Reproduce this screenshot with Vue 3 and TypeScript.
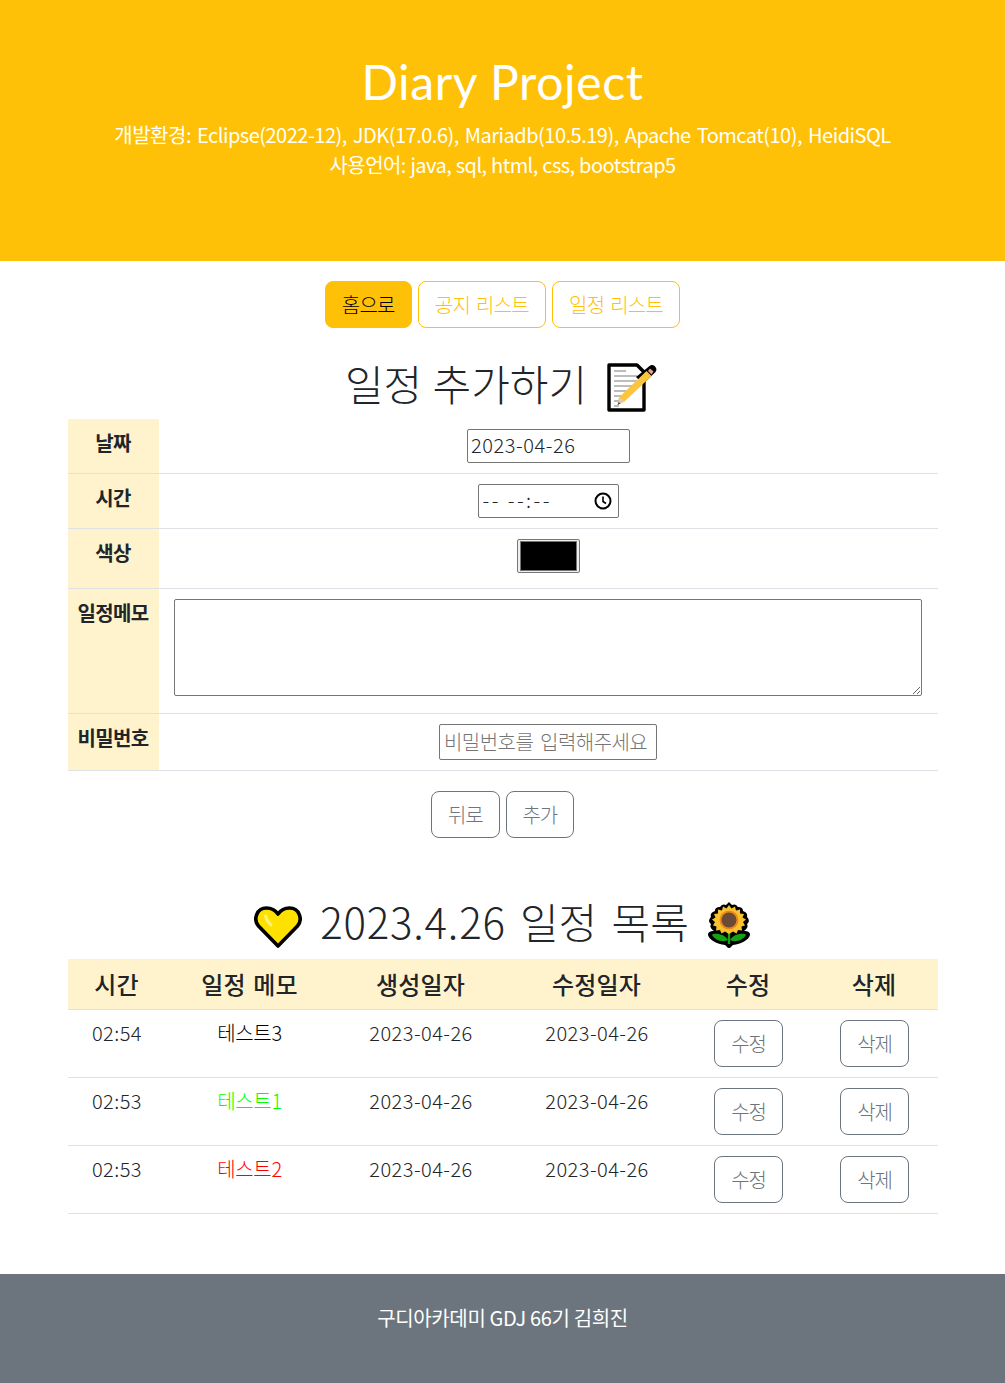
<script setup lang="ts">
interface Row { time: string; memo: string; color: string }
const rows: Row[] = [
  { time: '02:54', memo: '테스트3', color: '#000000' },
  { time: '02:53', memo: '테스트1', color: '#00ff00' },
  { time: '02:53', memo: '테스트2', color: '#ff0000' },
]
const columnWidths = [98, 168, 174, 178, 125, 127]
</script>

<template>
  <div class="page">
    <header class="hero">
      <h1>Diary Project</h1>
      <p class="line-a">개발환경: Eclipse(2022-12), JDK(17.0.6), Mariadb(10.5.19), Apache Tomcat(10), HeidiSQL</p>
      <p class="line-b">사용언어: java, sql, html, css, bootstrap5</p>
    </header>

    <main class="content">
      <nav class="tabs">
        <a class="btn solid">홈으로</a>
        <a class="btn warn">공지 리스트</a>
        <a class="btn warn">일정 리스트</a>
      </nav>

      <h2 class="title first">
        <span class="ko">일정 추가하기</span>
        <svg class="emoji memo" viewBox="0 0 50 50" aria-hidden="true">
          <path d="M2 3H30L37 10V48H2Z" fill="#fff" stroke="#000" stroke-width="3.400" stroke-linejoin="round" />
          <path d="M7 9H19M7 14H30M7 19H30M7 24H27M7 29H24M7 34H19M7 39H14M7 44H12" stroke="#a6a6a6" stroke-width="1.500" fill="none" />
          <path d="M42.500 4C44.500 2.500 46.500 3 48 4.500C49.500 6 50 8 48.500 10L36 22L29 15Z" fill="#000" />
          <path d="M39.500 9L44.500 14L17.500 39.500L11 37.500L13 34.500Z" fill="#fdc43c" />
          <path d="M43 6.500L46.500 9.500L44.500 12.500L41 9Z" fill="#e8a090" />
          <path d="M10.500 43L13 35.500L18 39.500Z" fill="#e8c8a0" />
          <path d="M10.500 43L11.500 40L13.500 41.500Z" fill="#444" />
        </svg>
      </h2>

      <table class="form-table">
        <colgroup>
          <col class="label-col" />
          <col />
        </colgroup>
        <tbody>
          <tr class="r-date">
            <th>날짜</th>
            <td><input class="field date" type="text" value="2023-04-26" /></td>
          </tr>
          <tr class="r-time">
            <th>시간</th>
            <td>
              <span class="time-wrap">
                <input class="field time" type="text" value="-- --:--" />
                <svg class="clock" viewBox="0 0 18 18" aria-hidden="true">
                  <circle cx="9" cy="9" r="7.500" fill="none" stroke="#000" stroke-width="2" />
                  <path d="M9 4.500V9.500L12 11.500" fill="none" stroke="#000" stroke-width="1.600" />
                </svg>
              </span>
            </td>
          </tr>
          <tr class="r-color">
            <th>색상</th>
            <td><input class="swatch" type="color" value="#000000" /></td>
          </tr>
          <tr class="r-memo">
            <th>일정메모</th>
            <td><textarea class="area"></textarea></td>
          </tr>
          <tr class="r-pw">
            <th>비밀번호</th>
            <td><input class="field pw" type="text" placeholder="비밀번호를 입력해주세요" /></td>
          </tr>
        </tbody>
      </table>

      <div class="actions">
        <a class="btn ghost">뒤로</a>
        <a class="btn ghost">추가</a>
      </div>

      <h2 class="title second">
        <svg class="emoji heart" viewBox="0 0 48 44" aria-hidden="true">
          <path d="M24 41L4.500 21C-1 14.500 2.500 3 12.500 3C18 3 21.500 5.500 24 9C26.500 5.500 30 3 35.500 3C45.500 3 49 14.500 43.500 21Z" fill="#ffe100" stroke="#000" stroke-width="3.600" stroke-linejoin="round" />
          <path d="M11.500 11C12.500 15 14 17.500 17 20" fill="none" stroke="#fff27a" stroke-width="3" stroke-linecap="round" />
        </svg>
        <span class="ko"><span class="digits">2023.4.26</span> 일정 목록</span>
        <svg class="emoji flower" viewBox="0 0 44 46" aria-hidden="true">
          <path d="M22 46C20 46 20 44 18 43C10 42 2 38 1 33C1 30 3 29 7 29C3 26 3 24 4 22C1 20 2 17 4 15C3 12 5 10 8 9C8 6 10 5 13 5C15 2 17 2 19 3L22 0L25 3C27 2 29 2 31 5C34 5 36 6 36 9C39 10 41 12 40 15C42 17 43 20 40 22C41 24 41 26 37 29C41 29 43 30 43 33C42 38 34 42 26 43C24 44 24 46 22 46Z" fill="#000" />
          <path d="M6 32C12 31 18 33 21 38C15 41 8 38 5 33ZM38 32C32 31 26 33 23 38C29 41 36 38 39 33Z" fill="#16a014" />
          <path d="M20.800 27H23.200V42H20.800Z" fill="#16a014" />
          <path d="M22 3L24.500 6.500L28 4.500L29 8.500L33 7.500L33 11.500L37 12L35.500 15.500L39 17.500L36 20L38 23.500L34.500 24.500L35 28.500L31 28L29.500 31.500L26 29.500L22 32L18 29.500L14.500 31.500L13 28L9 28.500L9.500 24.500L6 23.500L8 20L5 17.500L8.500 15.500L7 12L11 11.500L11 7.500L15 8.500L16 4.500L19.500 6.500Z" fill="#fbc02d" />
          <circle cx="22" cy="18" r="9.500" fill="#e88a1a" />
          <circle cx="22" cy="18" r="7.500" fill="#6b4a36" />
        </svg>
      </h2>

      <table class="list-table">
        <colgroup>
          <col v-for="(w, i) in columnWidths" :key="i" :style="{ width: w + 'px' }" />
        </colgroup>
        <thead>
          <tr>
            <th>시간</th>
            <th>일정 메모</th>
            <th>생성일자</th>
            <th>수정일자</th>
            <th>수정</th>
            <th>삭제</th>
          </tr>
        </thead>
        <tbody>
          <tr v-for="(row, i) in rows" :key="i">
            <td class="num">{{ row.time }}</td>
            <td class="memo-cell" :style="{ color: row.color }">{{ row.memo }}</td>
            <td class="num">2023-04-26</td>
            <td class="num">2023-04-26</td>
            <td class="btn-cell"><a class="btn ghost">수정</a></td>
            <td class="btn-cell"><a class="btn ghost">삭제</a></td>
          </tr>
        </tbody>
      </table>
    </main>

    <footer class="foot">구디아카데미 GDJ 66기 김희진</footer>
  </div>
</template>

<style>
html, body { margin: 0; background: #fff; }
</style>

<style scoped>
.page {
  font-family: "Noto Sans CJK KR", "Noto Sans", sans-serif;
  font-weight: 300;
  font-size: 20px;
  color: #212529;
  line-height: 30px;
  min-height: 1383px;
  display: flex;
  flex-direction: column;
}
.hero {
  height: 261px;
  box-sizing: border-box;
  background: #ffc107;
  color: #fff;
  text-align: center;
  padding-top: 54px;
}
.hero h1 {
  margin: 0 0 10px;
  font-family: "Lato", "Noto Sans", sans-serif;
  font-weight: 400;
  font-size: 48px;
  line-height: 56px;
  letter-spacing: 0.65px;
}
.hero p { margin: 0; font-weight: 400; }
.line-a { letter-spacing: -0.5px; word-spacing: 2px; }
.line-b { letter-spacing: -0.55px; word-spacing: 0.6px; }
.content {
  width: 870px;
  margin: 0 auto;
  flex: 1;
}
.tabs {
  display: flex;
  justify-content: center;
  gap: 6px;
  padding-top: 20px;
}
.btn {
  display: inline-block;
  box-sizing: border-box;
  height: 47px;
  padding: 8px 16px;
  border: 1px solid #6c757d;
  border-radius: 8px;
  line-height: 29px;
  font-size: 20px;
  text-align: center;
  letter-spacing: -0.7px;
  word-spacing: 2px;
}
.btn.solid { background: #ffc107; border-color: #ffc107; color: #000; }
.btn.warn { border-color: #ffc107; color: #ffc107; }
.btn.ghost { color: #6c757d; letter-spacing: -1.2px; }
.title {
  display: flex;
  align-items: center;
  justify-content: center;
  margin: 0;
  font-weight: 300;
  font-size: 42px;
  line-height: 60px;
}
.title .ko { margin-bottom: 8px; }
.digits { letter-spacing: 0.8px; word-spacing: 0; }
.title.first { padding-top: 26px; height: 91px; box-sizing: border-box; gap: 20px; }
.title.first .ko { word-spacing: 1px; }
.title.second { height: 60px; margin-top: 57px; margin-bottom: 4px; gap: 18px; }
.title.second .ko { word-spacing: 5px; }
.emoji { display: block; flex: none; }
.memo { width: 50px; height: 50px; margin-right: 3px; }
.heart { width: 48px; height: 44px; margin-top: 4px; }
.flower { width: 44px; height: 46px; }
.form-table, .list-table {
  width: 870px;
  border-collapse: collapse;
  table-layout: fixed;
}
.form-table th, .form-table td, .list-table th, .list-table td {
  border-bottom: 1px solid #dee2e6;
  padding: 8px;
  text-align: center;
  vertical-align: top;
}
.label-col { width: 91px; }
.form-table th {
  background: #fff3cd;
  font-weight: 700;
  font-size: 20px;
  padding: 8px 0;
  line-height: 32px;
  letter-spacing: -0.7px;
}
.form-table td { padding: 10px 16px 10px 15px; font-size: 0; line-height: 0; }
.r-date th, .r-date td, .r-time th, .r-time td { height: 54px; box-sizing: border-box; }
.r-color th, .r-color td { height: 60px; box-sizing: border-box; }
.r-memo th, .r-memo td { height: 125px; box-sizing: border-box; }
.r-pw th, .r-pw td { height: 57px; box-sizing: border-box; }
.field {
  box-sizing: border-box;
  border: 1px solid #767676;
  border-radius: 2px;
  padding: 0 3px 4px;
  margin: 0;
  font: inherit;
  font-size: 20px;
  line-height: 28px;
  color: #212529;
  background: #fff;
  outline: none;
}
.field::placeholder { color: #757575; opacity: 1; }
.date { width: 163px; height: 34px; letter-spacing: 0.55px; margin-left: 2px; }
.time-wrap { position: relative; display: inline-block; width: 141px; height: 34px; margin-left: 1px; }
.time { width: 141px; height: 34px; padding-left: 4px; letter-spacing: 2.5px; }
.clock { position: absolute; right: 7px; top: 8px; width: 18px; height: 18px; }
.swatch {
  box-sizing: border-box;
  width: 63px;
  height: 34px;
  margin: 0 0 0 1px;
  padding: 1px 2px;
  border: 1px solid #767676;
  border-radius: 2px;
  background: #efefef;
}
.swatch::-webkit-color-swatch-wrapper { padding: 0; }
.swatch::-webkit-color-swatch { border: 1px solid #767676; background: #000; }
.area {
  display: block;
  box-sizing: border-box;
  width: 748px;
  height: 97px;
  margin: 0;
  border: 1px solid #767676;
  border-radius: 2px;
  outline: none;
  font: inherit;
}
.pw { width: 218px; height: 36px; padding: 0 4px 2px; letter-spacing: -0.55px; word-spacing: 3px; margin-left: 1px; }
.actions {
  display: flex;
  justify-content: center;
  gap: 6px;
  padding-top: 20px;
}
.list-table th {
  background: #fff3cd;
  font-size: 24px;
  font-weight: 500;
  line-height: 34px;
  padding: 8px;
  letter-spacing: 0.2px;
  word-spacing: 2px;
}
.list-table td { height: 68px; box-sizing: border-box; padding: 8px; }
.list-table .num { letter-spacing: 0.45px; padding-left: 9px; }
.list-table .memo-cell { letter-spacing: -0.3px; }
.list-table .btn-cell { padding: 10px 8px 10px 9px; }
.foot {
  height: 109px;
  box-sizing: border-box;
  margin-top: 60px;
  padding-top: 29px;
  background: #6c757d;
  color: #fff;
  text-align: center;
  font-weight: 400;
  letter-spacing: -0.35px;
}
</style>
